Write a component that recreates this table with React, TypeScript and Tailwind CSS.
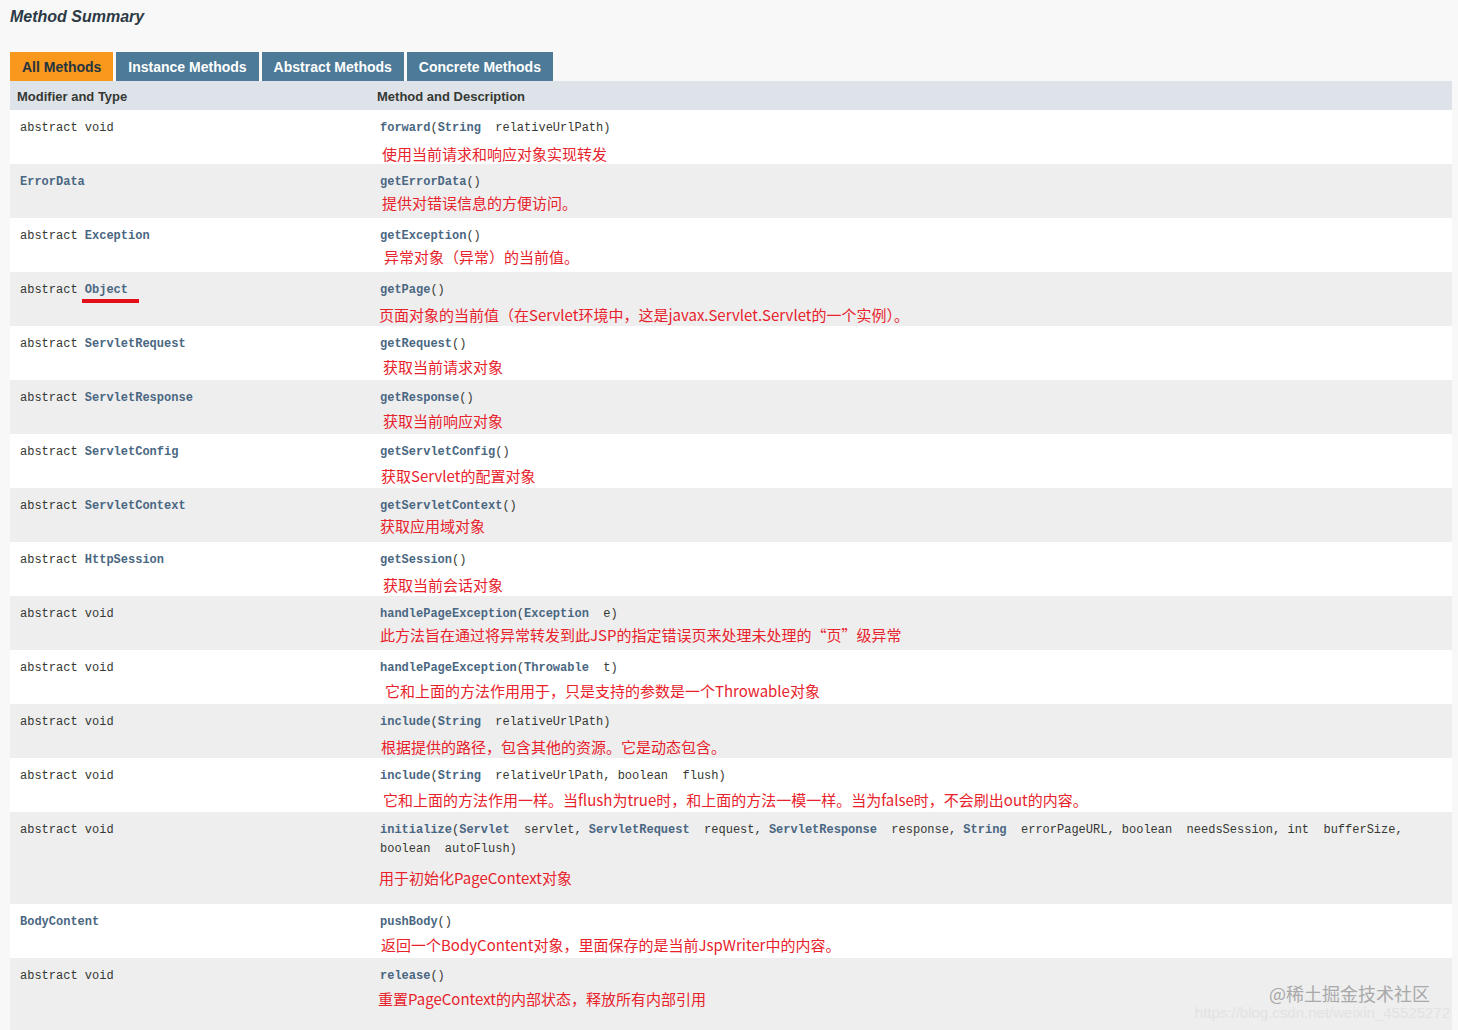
import type { ReactNode } from 'react'

const L = ({ children }: { children: ReactNode }) => (
  <span className="font-bold text-[#4a6782]">{children}</span>
)

type Row = {
  pre?: string
  type: string
  typeLink: boolean
  mark?: boolean
  method: ReactNode
  desc: string
  descCls: string
  h: string
}

const rows: Row[] = [
  {
    pre: 'abstract ',
    type: 'void',
    typeLink: false,
    method: (
      <>
        <L>forward</L>(<L>String</L>{'  relativeUrlPath)'}
      </>
    ),
    desc: '使用当前请求和响应对象实现转发',
    descCls: 'mt-[6px] ml-[2px]',
    h: 'h-[54px]',
  },
  {
    type: 'ErrorData',
    typeLink: true,
    method: (
      <>
        <L>getErrorData</L>()
      </>
    ),
    desc: '提供对错误信息的方便访问。',
    descCls: 'mt-[1px] ml-[2px]',
    h: 'h-[54px]',
  },
  {
    pre: 'abstract ',
    type: 'Exception',
    typeLink: true,
    method: (
      <>
        <L>getException</L>()
      </>
    ),
    desc: '异常对象（异常）的当前值。',
    descCls: 'mt-[1px] ml-[4px]',
    h: 'h-[54px]',
  },
  {
    pre: 'abstract ',
    type: 'Object',
    typeLink: true,
    mark: true,
    method: (
      <>
        <L>getPage</L>()
      </>
    ),
    desc: '页面对象的当前值（在Servlet环境中，这是javax.Servlet.Servlet的一个实例）。',
    descCls: 'mt-[5px] -ml-[1px]',
    h: 'h-[54px]',
  },
  {
    pre: 'abstract ',
    type: 'ServletRequest',
    typeLink: true,
    method: (
      <>
        <L>getRequest</L>()
      </>
    ),
    desc: '获取当前请求对象',
    descCls: 'mt-[3px] ml-[3px]',
    h: 'h-[54px]',
  },
  {
    pre: 'abstract ',
    type: 'ServletResponse',
    typeLink: true,
    method: (
      <>
        <L>getResponse</L>()
      </>
    ),
    desc: '获取当前响应对象',
    descCls: 'mt-[3px] ml-[3px]',
    h: 'h-[54px]',
  },
  {
    pre: 'abstract ',
    type: 'ServletConfig',
    typeLink: true,
    method: (
      <>
        <L>getServletConfig</L>()
      </>
    ),
    desc: '获取Servlet的配置对象',
    descCls: 'mt-[4px] ml-[1px]',
    h: 'h-[54px]',
  },
  {
    pre: 'abstract ',
    type: 'ServletContext',
    typeLink: true,
    method: (
      <>
        <L>getServletContext</L>()
      </>
    ),
    desc: '获取应用域对象',
    descCls: 'mt-0',
    h: 'h-[54px]',
  },
  {
    pre: 'abstract ',
    type: 'HttpSession',
    typeLink: true,
    method: (
      <>
        <L>getSession</L>()
      </>
    ),
    desc: '获取当前会话对象',
    descCls: 'mt-[5px] ml-[3px]',
    h: 'h-[54px]',
  },
  {
    pre: 'abstract ',
    type: 'void',
    typeLink: false,
    method: (
      <>
        <L>handlePageException</L>(<L>Exception</L>{'  e)'}
      </>
    ),
    desc: '此方法旨在通过将异常转发到此JSP的指定错误页来处理未处理的“页”级异常',
    descCls: 'mt-[1px]',
    h: 'h-[54px]',
  },
  {
    pre: 'abstract ',
    type: 'void',
    typeLink: false,
    method: (
      <>
        <L>handlePageException</L>(<L>Throwable</L>{'  t)'}
      </>
    ),
    desc: '它和上面的方法作用用于，只是支持的参数是一个Throwable对象',
    descCls: 'mt-[3px] ml-[5px]',
    h: 'h-[54px]',
  },
  {
    pre: 'abstract ',
    type: 'void',
    typeLink: false,
    method: (
      <>
        <L>include</L>(<L>String</L>{'  relativeUrlPath)'}
      </>
    ),
    desc: '根据提供的路径，包含其他的资源。它是动态包含。',
    descCls: 'mt-[5px] ml-[1px]',
    h: 'h-[54px]',
  },
  {
    pre: 'abstract ',
    type: 'void',
    typeLink: false,
    method: (
      <>
        <L>include</L>(<L>String</L>{'  relativeUrlPath, boolean  flush)'}
      </>
    ),
    desc: '它和上面的方法作用一样。当flush为true时，和上面的方法一模一样。当为false时，不会刷出out的内容。',
    descCls: 'mt-[4px] ml-[3px]',
    h: 'h-[54px]',
  },
  {
    pre: 'abstract ',
    type: 'void',
    typeLink: false,
    method: (
      <>
        <L>initialize</L>(<L>Servlet</L>
        {'  servlet, '}
        <L>ServletRequest</L>
        {'  request, '}
        <L>ServletResponse</L>
        {'  response, '}
        <L>String</L>
        {'  errorPageURL, boolean  needsSession, int  bufferSize,'}
        <br />
        {'boolean  autoFlush)'}
      </>
    ),
    desc: '用于初始化PageContext对象',
    descCls: 'mt-[9px] -ml-[1px]',
    h: 'h-[92px]',
  },
  {
    type: 'BodyContent',
    typeLink: true,
    method: (
      <>
        <L>pushBody</L>()
      </>
    ),
    desc: '返回一个BodyContent对象，里面保存的是当前JspWriter中的内容。',
    descCls: 'mt-[3px] ml-[1px]',
    h: 'h-[54px]',
  },
  {
    pre: 'abstract ',
    type: 'void',
    typeLink: false,
    method: (
      <>
        <L>release</L>()
      </>
    ),
    desc: '重置PageContext的内部状态，释放所有内部引用',
    descCls: 'mt-[3px] -ml-[2px]',
    h: 'h-[72px]',
  },
]

const tabs = ['All Methods', 'Instance Methods', 'Abstract Methods', 'Concrete Methods']

const mono = "font-['Liberation_Mono','DejaVu_Sans_Mono',monospace] text-[12px] leading-[19px] whitespace-pre text-[#353833]"

export default function App() {
  return (
    <div className="relative min-h-[1030px] overflow-hidden bg-[#f8f8f8] pl-[10px] pr-[6px] font-['Liberation_Sans',Arial,sans-serif]">
      <h3 className="pt-[7px] text-[16px] leading-[20px] font-bold italic text-[#2c3a45]">Method Summary</h3>

      <div className="mt-[25px] flex gap-[3px]">
        {tabs.map((t, i) => (
          <div
            key={t}
            className={
              i === 0
                ? 'h-[29px] bg-[#f8981d] px-[12px] pt-[1px] text-[14px] leading-[29px] font-bold text-[#253441]'
                : 'h-[29px] bg-[#4d7a97] px-[12px] pt-[1px] text-[14px] leading-[29px] font-bold text-white'
            }
          >
            {t}
          </div>
        ))}
      </div>

      <div className="grid h-[29px] grid-cols-[360px_1fr] items-center bg-[#dee3e9] pt-[2px] text-[13px] font-bold text-[#353833]">
        <div className="pl-[7px]">Modifier and Type</div>
        <div className="pl-[7px]">Method and Description</div>
      </div>

      {rows.map((r, i) => (
        <div
          key={i}
          className={`grid grid-cols-[360px_1fr] ${r.h} ${i % 2 === 0 ? 'bg-white' : 'bg-[#eeeeef]'}`}
        >
          <div className={`pl-[10px] pt-[9px] ${mono}`}>
            {r.pre}
            {r.typeLink ? (
              <span className="relative font-bold text-[#4a6782]">
                {r.type}
                {r.mark && <span className="absolute -left-[3px] top-[16px] h-[4px] w-[57px] bg-[#e3101a]" />}
              </span>
            ) : (
              r.type
            )}
          </div>
          <div className="pl-[10px] pt-[9px]">
            <div className={mono}>{r.method}</div>
            <div
              className={`${r.descCls} font-['Noto_Sans_CJK_SC','Noto_Sans',sans-serif] text-[15px] leading-[20px] text-[#e8222b]`}
            >
              {r.desc}
            </div>
          </div>
        </div>
      ))}

      <div className="pointer-events-none absolute right-[8px] bottom-[8px] flex flex-col items-end">
        <span className="mr-[20px] font-['Noto_Sans_CJK_SC',sans-serif] text-[18px] leading-[22px] text-[#a9a9a9]">
          @稀土掘金技术社区
        </span>
        <span className="font-['Liberation_Sans',sans-serif] text-[15px] leading-[18px] text-[#e2e2e2]">
          https://blog.csdn.net/weixin_45525272
        </span>
      </div>
    </div>
  )
}
